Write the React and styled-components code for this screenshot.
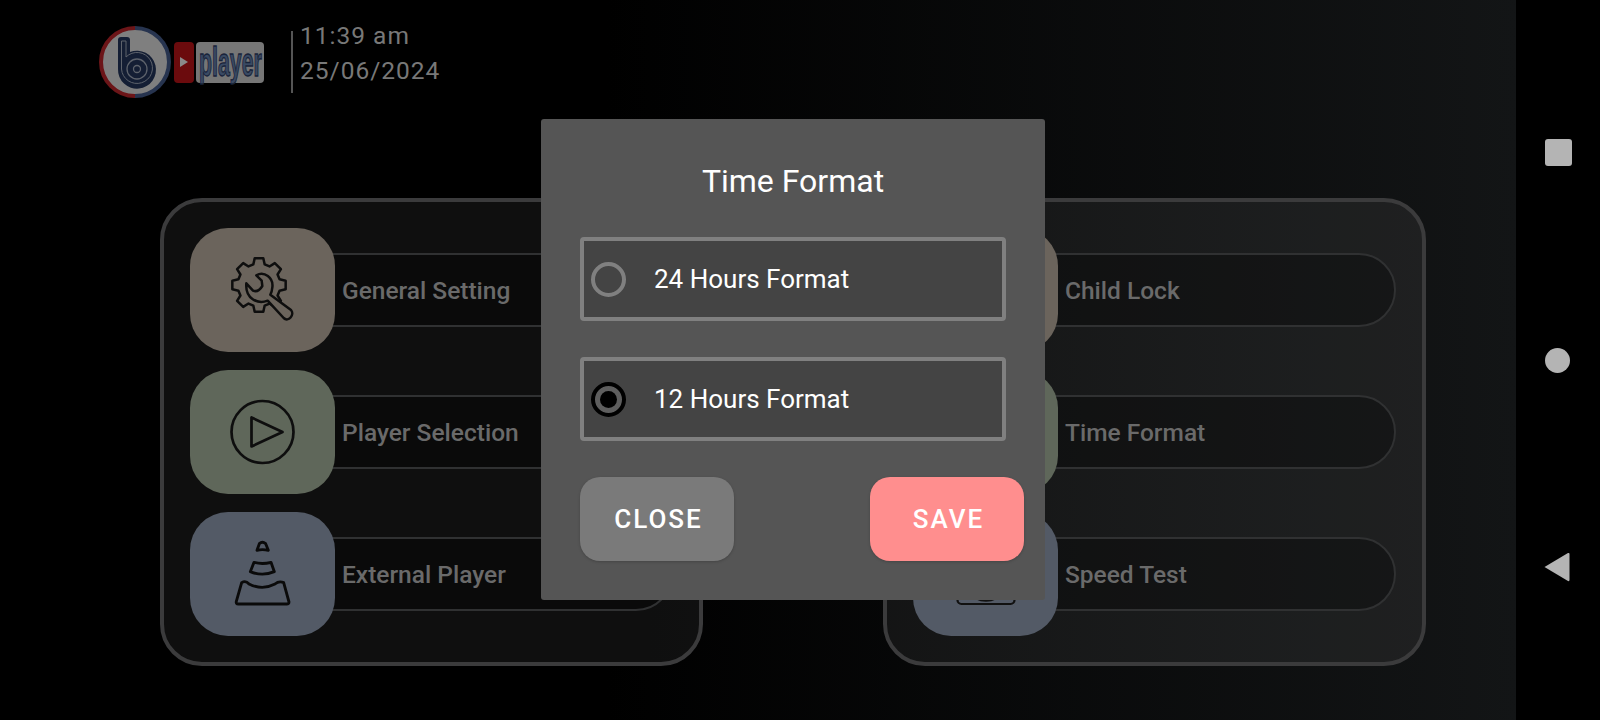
import React from "react";
import styled, { createGlobalStyle } from "styled-components";

const TEXT_DIM = "#6a6a6a";
const DIALOG_LINE = "#808080";

const GlobalStyle = createGlobalStyle`
  html, body {
    margin: 0;
    background: #000;
  }
  * {
    box-sizing: border-box;
  }
`;

const Page = styled.div`
  position: relative;
  display: flex;
  width: 1600px;
  height: 720px;
  overflow: hidden;
  font-family: Roboto, "Liberation Sans", sans-serif;
`;

const Main = styled.main`
  flex: 1;
  display: flex;
  flex-direction: column;
  background: linear-gradient(90deg, #000 0%, #000 40%, #131516 100%);
`;

const Header = styled.header`
  display: flex;
  align-items: center;
  height: 124px;
  padding-left: 99px;
`;

const LogoBox = styled.div`
  display: flex;
  align-items: center;
  gap: 2px;
  margin-right: 27px;
`;

const PlayBadge = styled.div`
  display: flex;
  align-items: center;
  justify-content: center;
  width: 20px;
  height: 41px;
  margin-left: 1px;
  background: #6b0b0d;
  border-radius: 4px;
`;

const PlayerBadge = styled.div`
  display: flex;
  align-items: center;
  justify-content: center;
  width: 68px;
  height: 41px;
  background: #767676;
  border-radius: 4px;
`;

const PlayerWord = styled.span`
  display: block;
  font-family: "Liberation Sans", sans-serif;
  font-weight: 700;
  font-size: 41px;
  line-height: 38px;
  color: #3a4a63;
  transform: scaleX(0.52);
  -webkit-text-stroke: 1.4px #18233a;
`;

const Clock = styled.div`
  display: flex;
  flex-direction: column;
  gap: 7px;
  height: 62px;
  padding-left: 7px;
  border-left: 2px solid #555;
  color: #787878;
  font-size: 24.5px;
  line-height: 28px;
  letter-spacing: 1px;

  span:first-child {
    margin-top: -9px;
  }
`;

const Cards = styled.div`
  display: flex;
  gap: 180px;
  margin: 74px 0 0 160px;
`;

const Card = styled.section`
  display: flex;
  flex-direction: column;
  gap: 18px;
  width: 543px;
  height: 468px;
  padding: 26px;
  background: rgba(255, 255, 255, 0.06);
  border: 4px solid #3b3b3c;
  border-radius: 42px;
`;

const Row = styled.div`
  display: flex;
  align-items: center;
  height: 124px;
`;

const Tile = styled.div`
  position: relative;
  z-index: 1;
  flex: none;
  display: flex;
  align-items: center;
  justify-content: center;
  width: 145px;
  height: 124px;
  background: ${(p) => p.$color};
  border-radius: 38px;
`;

const Pill = styled.div`
  flex: 1;
  display: flex;
  align-items: center;
  height: 74px;
  margin-left: -40px;
  padding: 1px 0 0 45px;
  background: rgba(0, 0, 0, 0.28);
  border: 2px solid #303132;
  border-radius: 0 37px 37px 0;
  color: ${TEXT_DIM};
  font-size: 24.5px;
  font-weight: 500;
`;

const Rail = styled.nav`
  flex: none;
  display: flex;
  flex-direction: column;
  align-items: flex-start;
  justify-content: space-between;
  width: 84px;
  padding: 139px 0 138px 29px;
  background: #000;
`;

const NavSquare = styled.div`
  width: 27px;
  height: 27px;
  background: #b4b4b4;
  border-radius: 3px;
`;

const NavDot = styled.div`
  width: 25px;
  height: 25px;
  margin-top: 2px;
  background: #b4b4b4;
  border-radius: 50%;
`;

const NavBack = styled.svg`
  margin-left: -1px;
`;

const Dialog = styled.div`
  position: absolute;
  top: 119px;
  left: 541px;
  z-index: 2;
  display: flex;
  flex-direction: column;
  width: 504px;
  height: 481px;
  padding: 42px 21px 0 39px;
  background: #555;
  border-radius: 3px;
`;

const Title = styled.h2`
  width: 426px;
  margin: 0 0 36px;
  color: #fff;
  font-size: 32px;
  font-weight: 400;
  line-height: 40px;
  text-align: center;
`;

const Options = styled.div`
  display: flex;
  flex-direction: column;
  gap: 36px;
  width: 426px;
`;

const Option = styled.label`
  display: flex;
  align-items: center;
  gap: 28px;
  height: 84px;
  padding-left: 7px;
  background: #444;
  border: 4px solid ${DIALOG_LINE};
  border-radius: 4px;
  color: #fff;
  font-size: 26px;
`;

const Radio = styled.span`
  flex: none;
  display: flex;
  align-items: center;
  justify-content: center;
  width: 35px;
  height: 35px;
  background: ${(p) => (p.$checked ? "#5e5e5e" : "transparent")};
  border: ${(p) => (p.$checked ? "4px solid #000" : `4px solid ${DIALOG_LINE}`)};
  border-radius: 50%;

  &::after {
    content: "";
    display: ${(p) => (p.$checked ? "block" : "none")};
    width: 17px;
    height: 17px;
    background: #000;
    border-radius: 50%;
  }
`;

const Actions = styled.div`
  display: flex;
  justify-content: space-between;
  margin-top: 36px;
`;

const ActionButton = styled.button`
  width: 154px;
  height: 84px;
  padding: 0 0 0 3px;
  background: ${(p) => p.$bg};
  border: 0;
  border-radius: 20px;
  box-shadow: 0 1px 3px rgba(0, 0, 0, 0.2);
  color: #fff;
  font-family: inherit;
  font-size: 26px;
  font-weight: 500;
  letter-spacing: 2px;
`;

function gearPath() {
  // 8 toothed outline, drawn in the 240 unit box of the icon
  const cx = 112;
  const cy = 105;
  const pts = [];
  for (let i = 0; i < 8; i++) {
    const a = (i * Math.PI) / 4 - Math.PI / 2;
    const at = (r, da) => [cx + r * Math.cos(a + da), cy + r * Math.sin(a + da)];
    pts.push(at(64, -0.27), at(81, -0.16), at(81, 0.16), at(64, 0.27));
  }
  return "M" + pts.map((p) => p[0].toFixed(1) + " " + p[1].toFixed(1)).join("L") + "Z";
}

const GearIcon = () => (
  <svg width="80" height="80" viewBox="0 0 240 240" fill="none" stroke="#0e0e0e" strokeWidth="7.5" strokeLinejoin="round">
    <g transform="translate(-4 0)">
      <path d={gearPath()} />
      <path
        fill="#6b645c"
        d="M74 100L94 122Q110 128 122 108L120 92L104 76C128 62 156 84 152 112C151 122 150 128 146 134L208 180C220 194 200 218 186 204L138 152C108 164 70 146 74 100Z"
      />
    </g>
  </svg>
);

const PlayIcon = () => (
  <svg width="66" height="66" viewBox="0 0 66 66" fill="none" stroke="#0e0e0e" strokeWidth="2.7" strokeLinejoin="round">
    <circle cx="32.5" cy="33" r="31" />
    <path d="M21.5 18.5V47.5L52.5 33Z" />
  </svg>
);

const ConeIcon = () => (
  <svg width="75" height="80" viewBox="0 0 225 240" fill="none" stroke="#0a0a0a" strokeWidth="8.5" strokeLinejoin="round">
    <path d="M96 49L103 29Q112 21 122 29L130 49Q112 45 96 49Z" />
    <path d="M87 85L76 113Q112 128 148 113L138 85Q112 92 87 85Z" />
    <path d="M50 146Q62 138 72 150Q112 170 150 150Q162 140 176 146L192 204Q192 210 185 210L40 210Q32 210 34 202Z" />
  </svg>
);

const LockIcon = () => (
  <svg width="66" height="66" viewBox="0 0 66 66" fill="none" stroke="#111" strokeWidth="2.2">
    <rect x="13" y="28" width="40" height="30" rx="5" />
    <path d="M21 28V18a12 12 0 0 1 24 0V28" />
    <circle cx="33" cy="43" r="4" />
  </svg>
);

const ClockIcon = () => (
  <svg width="66" height="66" viewBox="0 0 66 66" fill="none" stroke="#111" strokeWidth="2.2" strokeLinecap="round">
    <circle cx="33" cy="33" r="31" />
    <path d="M33 14V33L45 41" />
  </svg>
);

const SpeedIcon = () => (
  <svg width="60" height="64" viewBox="0 0 60 64" fill="none" stroke="#111" strokeWidth="2.2">
    <rect x="1.5" y="2" width="57" height="60" rx="4" />
    <path d="M8 32a22 22 0 0 1 44 0" />
    <path d="M20 56Q30 61 40 56" strokeWidth="2.6" />
  </svg>
);

const BrandMark = () => (
  <svg width="72" height="72" viewBox="0 0 72 72">
    <circle cx="36" cy="36" r="33" fill="#7f7f7f" />
    <path d="M36 2A34 34 0 0 0 36 70" fill="none" stroke="#6c1518" strokeWidth="4" />
    <path d="M36 2A34 34 0 0 1 36 70" fill="none" stroke="#27344f" strokeWidth="4" />
    <path d="M19 14Q19 11 22 11H28Q31 11 31 14V26A19 19 0 1 1 19 43Z" fill="#141e34" />
    <path d="M22.5 15H27V31A15.5 15.5 0 1 1 22.5 43Z" fill="none" stroke="#5d626b" strokeWidth="1" />
    <circle cx="38" cy="43" r="10" fill="none" stroke="#5d626b" strokeWidth="1.3" />
    <circle cx="38" cy="43" r="3.5" fill="none" stroke="#5d626b" strokeWidth="1.3" />
  </svg>
);

const leftRows = [
  { label: "General Setting", color: "#6b645c", icon: <GearIcon /> },
  { label: "Player Selection", color: "#5f675a", icon: <PlayIcon /> },
  { label: "External Player", color: "#535a66", icon: <ConeIcon /> },
];

const rightRows = [
  { label: "Child Lock", color: "#6b645c", icon: <LockIcon /> },
  { label: "Time Format", color: "#5f675a", icon: <ClockIcon /> },
  { label: "Speed Test", color: "#535a66", icon: <SpeedIcon /> },
];

const MenuCard = ({ rows }) => (
  <Card>
    {rows.map((row) => (
      <Row key={row.label}>
        <Tile $color={row.color}>{row.icon}</Tile>
        <Pill>{row.label}</Pill>
      </Row>
    ))}
  </Card>
);

export default function App() {
  return (
    <Page>
      <GlobalStyle />
      <Main>
        <Header>
          <LogoBox>
            <BrandMark />
            <PlayBadge>
              <svg width="10" height="12" viewBox="0 0 10 12">
                <path d="M1 1L9 6L1 11Z" fill="#8a8a8a" />
              </svg>
            </PlayBadge>
            <PlayerBadge>
              <PlayerWord>player</PlayerWord>
            </PlayerBadge>
          </LogoBox>
          <Clock>
            <span>11:39 am</span>
            <span>25/06/2024</span>
          </Clock>
        </Header>
        <Cards>
          <MenuCard rows={leftRows} />
          <MenuCard rows={rightRows} />
        </Cards>
      </Main>
      <Rail>
        <NavSquare />
        <NavDot />
        <NavBack width="26" height="30" viewBox="0 0 26 30">
          <path d="M24 1Q25.5 .5 25.5 2V28Q25.5 29.5 24 29L.5 15Z" fill="#b4b4b4" />
        </NavBack>
      </Rail>
      <Dialog>
        <Title>Time Format</Title>
        <Options>
          <Option>
            <Radio />
            24 Hours Format
          </Option>
          <Option>
            <Radio $checked />
            12 Hours Format
          </Option>
        </Options>
        <Actions>
          <ActionButton $bg="#7a7a7a">CLOSE</ActionButton>
          <ActionButton $bg="#ff8e8e">SAVE</ActionButton>
        </Actions>
      </Dialog>
    </Page>
  );
}
